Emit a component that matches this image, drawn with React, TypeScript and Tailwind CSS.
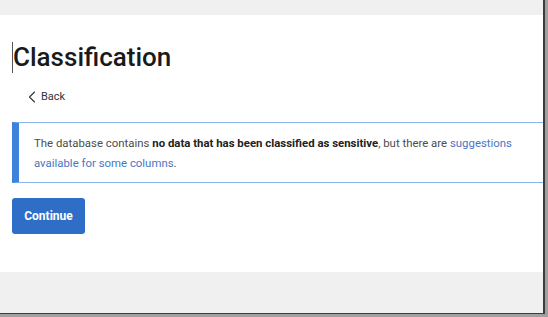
import { ChevronLeft } from 'lucide-react';

export default function App() {
  return (
    <div className="h-[317px] w-[548px] overflow-hidden bg-[#a0a0a0] font-['Roboto',sans-serif]">
      <div className="flex h-[314px] w-[545px] flex-col border-r-2 border-b border-[#3c3c3c] bg-[#f0f0f0]">
        <div className="h-[15px] shrink-0" />
        <main className="h-[257px] shrink-0 overflow-hidden bg-white pl-3">
          <div className="mt-[24px] flex items-center">
            <span className="h-[31px] w-px bg-[#555]" />
            <h1 className="text-[26px] leading-[36px] font-medium text-[#1a1a1a]">
              Classification
            </h1>
          </div>
          <a className="mt-[14px] flex h-[16px] items-center pl-[10px] text-[11px] text-[#333]">
            <ChevronLeft size={20} strokeWidth={1.3} />
            <span className="-ml-[1px]">Back</span>
          </a>
          <div className="mt-[17px] w-[560px] border border-l-[7px] border-[#8ab4ea] border-l-[#3d83dc] pt-[10px] pr-[20px] pb-[9px] pl-[15px] text-[11.4px] leading-[20px] text-[#4d4d4d]">
            The database contains{' '}
            <b className="font-bold text-[#222]">
              no data that has been classified as sensitive
            </b>
            , but there are{' '}
            <span className="text-[#4a76c4]">
              suggestions available for some columns
            </span>
            .
          </div>
          <button className="mt-[15px] h-[36px] w-[73px] rounded-[3px] bg-[#2f6ec7] text-[12px] font-bold text-white">
            Continue
          </button>
        </main>
      </div>
    </div>
  );
}
